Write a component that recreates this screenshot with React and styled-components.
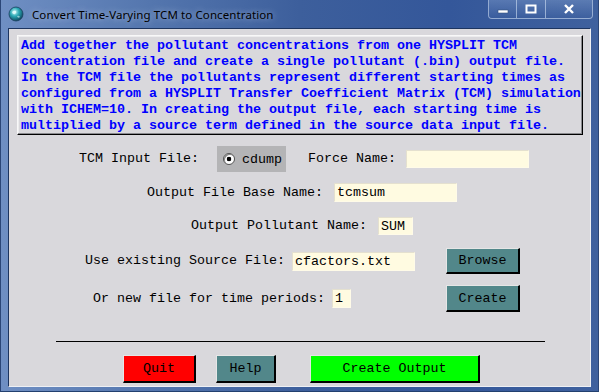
import React from "react";
import styled, { createGlobalStyle } from "styled-components";

const GlobalStyle = createGlobalStyle`
  html, body {
    margin: 0;
    padding: 0;
    width: 599px;
    height: 392px;
    overflow: hidden;
  }
`;

const INFO = [
  "Add together the pollutant concentrations from one HYSPLIT TCM",
  "concentration file and create a single pollutant (.bin) output file.",
  "In the TCM file the pollutants represent different starting times as",
  "configured from a HYSPLIT Transfer Coefficient Matrix (TCM) simulation",
  "with ICHEM=10. In creating the output file, each starting time is",
  "multiplied by a source term defined in the source data input file.",
];

const App = () => {
  return (
    <>
      <GlobalStyle />
      <Frame>
        <TitleBar>
          <TitleIcon viewBox="0 0 16 16">
            <defs>
              <radialGradient id="globe" cx="0.4" cy="0.35" r="0.7">
                <stop offset="0" stopColor="#c8f4f4" />
                <stop offset="0.45" stopColor="#2aa8b4" />
                <stop offset="1" stopColor="#0b3e56" />
              </radialGradient>
            </defs>
            <circle cx="8" cy="8" r="7" fill="url(#globe)" stroke="#1b3f5e" strokeWidth="0.8" />
            <path d="M4 6 Q6 4 8 5 Q9 7 7 8 Q5 9 4 6Z" fill="#e8ffff" opacity="0.8" />
            <path d="M9 10 Q11 9 12 11 Q10 13 9 10Z" fill="#d8f8f8" opacity="0.6" />
          </TitleIcon>
          <TitleText>Convert Time-Varying TCM to Concentration</TitleText>
          <CaptionGroup>
            <CaptionButton $w={27}>
              <svg width="12" height="10" viewBox="0 0 12 10">
                <rect x="1" y="6" width="10" height="3" fill="#fff" stroke="#33507f" strokeWidth="0.6" />
              </svg>
            </CaptionButton>
            <CaptionButton $w={28}>
              <svg width="12" height="10" viewBox="0 0 12 10">
                <rect x="1.5" y="1.5" width="9" height="7" fill="none" stroke="#fff" strokeWidth="2" />
              </svg>
            </CaptionButton>
            <CaptionButton $w={46}>
              <svg width="12" height="10" viewBox="0 0 12 10">
                <path d="M2 1 L10 9 M10 1 L2 9" stroke="#fff" strokeWidth="2.4" />
              </svg>
            </CaptionButton>
          </CaptionGroup>
        </TitleBar>
        <Client>
          <InfoBox>
            {INFO.map((line) => (
              <div key={line}>{line}</div>
            ))}
          </InfoBox>

          <Row $mt={11} $pl={70}>
            <Label>TCM Input File:</Label>
            <RadioBox>
              <RadioDot />
              <span>cdump</span>
            </RadioBox>
            <Label $ml={22}>Force Name:</Label>
            <Entry $w={123} $ml={10} $h={18} defaultValue="" />
          </Row>

          <Row $mt={11} $pl={138}>
            <Label>Output File Base Name:</Label>
            <Entry $w={123} $ml={11} $h={19} defaultValue="tcmsum" />
          </Row>

          <Row $mt={15} $pl={182}>
            <Label>Output Pollutant Name:</Label>
            <Entry $w={35} $ml={11} $h={18} defaultValue="SUM" />
          </Row>

          <Row $mt={13} $pl={76}>
            <Label>Use existing Source File:</Label>
            <Entry $w={123} $ml={7} $h={19} defaultValue="cfactors.txt" />
            <Button $bg="#52878a" $w={74} $ml={31} $h={26}>
              Browse
            </Button>
          </Row>

          <Row $mt={11} $pl={84}>
            <Label>Or new file for time periods:</Label>
            <Entry $w={19} $ml={7} $h={19} defaultValue="1" />
            <Button $bg="#52878a" $w={74} $ml={95} $h={27}>
              Create
            </Button>
          </Row>

          <Separator />

          <Row $mt={13} $pl={114}>
            <Button $bg="#ff0000" $w={73} $h={28}>
              Quit
            </Button>
            <Button $bg="#52878a" $w={60} $ml={20} $h={28}>
              Help
            </Button>
            <Button $bg="#00ff00" $w={170} $ml={34} $h={28}>
              Create Output
            </Button>
          </Row>
        </Client>
      </Frame>
    </>
  );
};

const Frame = styled.div`
  width: 599px;
  height: 392px;
  box-sizing: border-box;
  overflow: hidden;
  padding: 0 7px 0 7px;
  background: linear-gradient(
    to right,
    #6f8fc3 0%,
    #5476ae 25%,
    #3d5f9c 50%,
    #34579a 75%,
    #3f619e 100%
  );
  border-left: 1px solid #2b4677;
  border-right: 1px solid #2b4677;
  border-bottom: 1px solid #22406f;
`;

const TitleBar = styled.div`
  height: 28px;
  display: flex;
  align-items: flex-start;
`;

const TitleIcon = styled.svg`
  width: 16px;
  height: 16px;
  margin-top: 6px;
`;

const TitleText = styled.div`
  margin-left: 8px;
  margin-top: 7px;
  font-family: "Noto Sans", "Liberation Sans", sans-serif;
  font-size: 11.5px;
  color: #000;
  letter-spacing: 0.1px;
  text-shadow: 0 0 6px rgba(220, 230, 245, 0.7);
`;

const CaptionGroup = styled.div`
  margin-left: auto;
  margin-right: -2px;
  display: flex;
  height: 18px;
  border: 1px solid rgba(210, 225, 245, 0.6);
  border-top: none;
  border-radius: 0 0 4px 4px;
  overflow: hidden;
`;

const CaptionButton = styled.div`
  width: ${(p) => p.$w}px;
  height: 100%;
  display: flex;
  align-items: center;
  justify-content: center;
  background: linear-gradient(to bottom, rgba(120, 150, 200, 0.5), rgba(60, 95, 160, 0.4));
  & + & {
    border-left: 1px solid rgba(210, 225, 245, 0.6);
  }
`;

const Client = styled.div`
  height: 359px;
  box-sizing: border-box;
  display: flex;
  flex-direction: column;
  background: #d9d8dc;
  border: 1px solid #eef0f4;
  border-top-color: #1d3560;
  border-left-color: #1d3560;
  font-family: "Liberation Mono", "Courier New", monospace;
  font-size: 13.33px;
  color: #000;
`;

const InfoBox = styled.div`
  margin: 6px 0 0 8px;
  width: 566px;
  height: 100px;
  box-sizing: border-box;
  padding: 2px 0 0 3px;
  line-height: 16px;
  color: #0000ff;
  font-weight: bold;
  white-space: pre;
  border-top: 1px solid #f8f8f8;
  border-left: 1px solid #f8f8f8;
  border-right: 1px solid #000;
  border-bottom: 1px solid #000;
  box-shadow: inset -1px -1px 0 #8a8a8e, inset 1px 1px 0 #ececee;
`;

const Row = styled.div`
  display: flex;
  align-items: center;
  flex-shrink: 0;
  margin-top: ${(p) => p.$mt || 0}px;
  padding-left: ${(p) => p.$pl || 0}px;
`;

const Label = styled.span`
  margin-left: ${(p) => p.$ml || 0}px;
  white-space: pre;
  line-height: 16px;
`;

const RadioBox = styled.div`
  margin-left: 18px;
  width: 69px;
  height: 26px;
  box-sizing: border-box;
  padding-left: 6px;
  display: flex;
  align-items: center;
  gap: 7px;
  background: #b4b4b6;
`;

const RadioDot = styled.span`
  width: 12px;
  height: 12px;
  box-sizing: border-box;
  border-radius: 50%;
  background: radial-gradient(circle, #000 0 2px, #fff 2.6px);
  border: 1px solid #555;
  box-shadow: inset 1px 1px 0 #888;
`;

const Entry = styled.input`
  width: ${(p) => p.$w}px;
  height: ${(p) => p.$h}px;
  margin: 0 0 0 ${(p) => p.$ml || 0}px;
  padding: 0 0 0 2px;
  box-sizing: border-box;
  border: 1px solid #fffbe8;
  border-top-color: #e4e0cf;
  border-left-color: #e4e0cf;
  background: #fffbe1;
  font-family: "Liberation Mono", "Courier New", monospace;
  font-size: 13.33px;
  color: #000;
  outline: none;
`;

const Button = styled.div`
  width: ${(p) => p.$w}px;
  height: ${(p) => p.$h}px;
  margin-left: ${(p) => p.$ml || 0}px;
  box-sizing: border-box;
  display: flex;
  align-items: center;
  justify-content: center;
  background: ${(p) => p.$bg};
  border-top: 1px solid #e6e6e6;
  border-left: 1px solid #e6e6e6;
  border-right: 2px solid #000;
  border-bottom: 2px solid #000;
  color: #000;
`;

const Separator = styled.div`
  flex-shrink: 0;
  margin: 29px 0 0 47px;
  width: 489px;
  height: 1px;
  background: #000;
`;

export default App;
